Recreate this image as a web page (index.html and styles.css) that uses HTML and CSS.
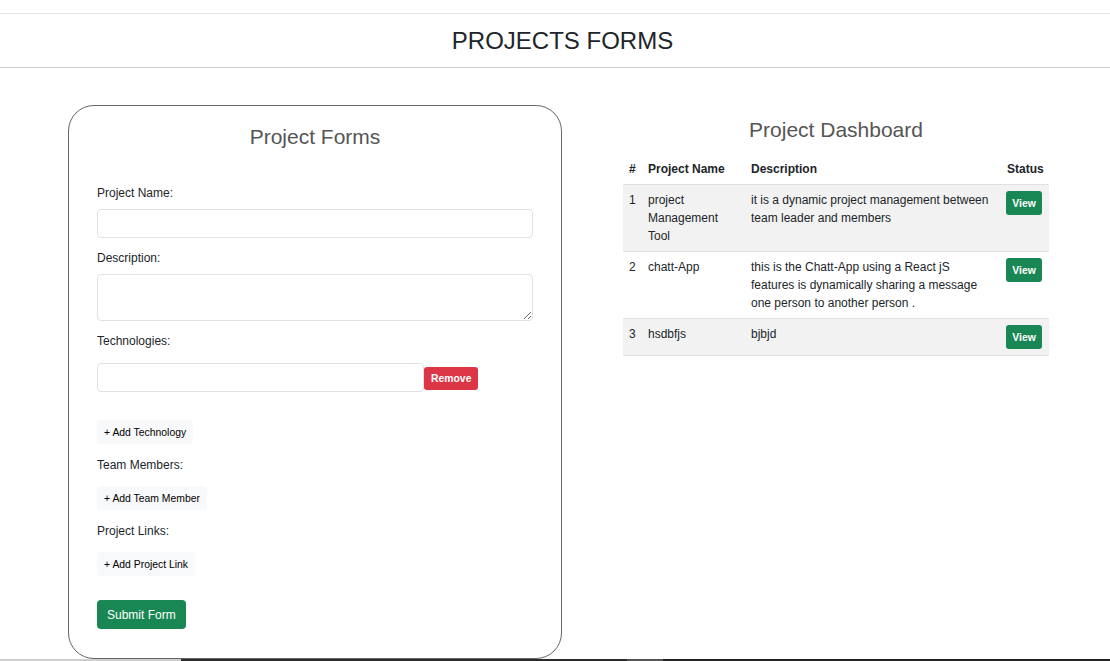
FILE: index.html
```html
<!DOCTYPE html>
<html lang="en">
<head>
<meta charset="utf-8">
<title>Projects Forms</title>
<link rel="stylesheet" href="styles.css">
</head>
<body>
<div class="topbar"></div>
<header class="page-header">
  <h1 class="page-title">PROJECTS FORMS</h1>
</header>
<main class="main">
  <section class="card">
    <h2 class="card-title">Project Forms</h2>
    <form class="form">
      <div class="field">
        <label class="label">Project Name:</label>
        <input class="input" type="text">
      </div>
      <div class="field">
        <label class="label">Description:</label>
        <textarea class="input textarea"></textarea>
      </div>
      <div class="field">
        <label class="label loose">Technologies:</label>
        <div class="tech-row">
          <input class="input tech-input" type="text">
          <button type="button" class="btn-remove">Remove</button>
        </div>
        <button type="button" class="btn-add spaced">+ Add Technology</button>
      </div>
      <div class="field list-field">
        <label class="label list-label">Team Members:</label>
        <button type="button" class="btn-add">+ Add Team Member</button>
      </div>
      <div class="field list-field">
        <label class="label list-label">Project Links:</label>
        <button type="button" class="btn-add">+ Add Project Link</button>
      </div>
      <button type="button" class="btn-submit">Submit Form</button>
    </form>
  </section>
  <section class="dashboard">
    <h2 class="dash-title">Project Dashboard</h2>
    <table class="table">
      <colgroup>
        <col class="c-num"><col class="c-name"><col class="c-desc"><col class="c-status">
      </colgroup>
      <thead>
        <tr><th>#</th><th>Project Name</th><th>Description</th><th>Status</th></tr>
      </thead>
      <tbody>
        <tr class="odd">
          <td>1</td><td>project Management Tool</td>
          <td>it is a dynamic project management between team leader and members</td>
          <td><button type="button" class="btn-view">View</button></td>
        </tr>
        <tr>
          <td>2</td><td>chatt-App</td>
          <td>this is the Chatt-App using a React jS features is dynamically sharing a message one person to another person .</td>
          <td><button type="button" class="btn-view">View</button></td>
        </tr>
        <tr class="odd">
          <td>3</td><td>hsdbfjs</td>
          <td>bjbjd</td>
          <td><button type="button" class="btn-view">View</button></td>
        </tr>
      </tbody>
    </table>
  </section>
</main>
<footer class="footer">
  <span class="seg seg-a"></span><span class="seg seg-b"></span><span class="seg seg-c"></span><span class="seg seg-d"></span>
</footer>
</body>
</html>
```
FILE: styles.css
```css
* { box-sizing: border-box; }
html, body { margin: 0; padding: 0; }
body {
  font-family: "Liberation Sans", Arial, sans-serif;
  color: #212529;
  background: #fff;
  font-size: 12px;
}
.topbar {
  height: 14px;
  border-bottom: 1px solid #e2e2e2;
}
.page-header {
  height: 54px;
  border-bottom: 1px solid #cfcfcf;
  display: flex;
  align-items: center;
  justify-content: center;
  padding-left: 15px;
}
.page-title {
  margin: 0;
  font-size: 24px;
  font-weight: 400;
  line-height: 28px;
  color: #212529;
}
.main {
  display: flex;
  align-items: flex-start;
  gap: 61px;
  padding: 37px 0 0 68px;
}
.card {
  width: 494px;
  border: 1px solid #666;
  border-radius: 26px;
  padding: 19px 28px 29px;
  flex: none;
}
.card-title {
  margin: 0 0 37px;
  text-align: center;
  font-size: 21px;
  line-height: 24px;
  font-weight: 400;
  color: #555;
}
.form { display: flex; flex-direction: column; align-items: flex-start; }
.field {
  display: flex;
  flex-direction: column;
  align-items: flex-start;
  width: 100%;
}
.field + .field { margin-top: 13px; }
.field + .list-field { margin-top: 14px; }
.label {
  font-size: 12px;
  line-height: 14px;
  margin-bottom: 9px;
}
.label.loose { margin-bottom: 15px; }
.label.list-label { margin-bottom: 14px; }
.input {
  width: 100%;
  height: 29px;
  border: 1px solid #dee2e6;
  border-radius: 4px;
  font-family: inherit;
  font-size: 12px;
  padding: 4px 8px;
  background: #fff;
  margin: 0;
}
.textarea { height: 47px; resize: vertical; display: block; }
.tech-row { display: flex; align-items: center; width: 100%; }
.tech-input { width: 327px; flex: none; }
.btn-remove {
  height: 23px;
  padding: 0 7px;
  border: none;
  border-radius: 3px;
  background: #dc3545;
  color: #fff;
  font-family: inherit;
  font-size: 10.4px;
  font-weight: 700;
  margin: 1px 0 0;
}
.btn-add {
  height: 24px;
  padding: 0 7px;
  border: none;
  border-radius: 3px;
  background: #f8f9fa;
  color: #000;
  font-family: inherit;
  font-size: 10.4px;
}
.btn-add.spaced { margin-top: 28px; }
.btn-submit {
  margin-top: 24px;
  height: 29px;
  padding: 0 10px;
  border: none;
  border-radius: 4px;
  background: #198754;
  color: #fff;
  font-family: inherit;
  font-size: 12px;
}
.dashboard {
  width: 426px;
  flex: none;
  margin-top: 13px;
}
.dash-title {
  margin: 0 0 12px;
  text-align: center;
  font-size: 21px;
  line-height: 24px;
  font-weight: 400;
  color: #555;
}
.table {
  width: 426px;
  border-collapse: collapse;
  table-layout: fixed;
  font-size: 12px;
  line-height: 18px;
}
.c-num { width: 19px; }
.c-name { width: 103px; }
.c-desc { width: 256px; }
.c-status { width: 48px; }
.table th, .table td {
  padding: 6px;
  text-align: left;
  vertical-align: top;
  border-bottom: 1px solid #dee2e6;
}
.table th { font-weight: 700; }
.table tr.odd td { background: #f2f2f2; }
.btn-view {
  display: block;
  width: 36px;
  height: 24px;
  padding: 0;
  margin-left: -1px;
  border: none;
  border-radius: 3px;
  background: #198754;
  color: #fff;
  font-family: inherit;
  font-size: 10.4px;
  font-weight: 700;
}
.footer {
  display: flex;
  height: 20px;
}
.seg { display: block; height: 100%; }
.seg-a { width: 181px; background: #cfcfcf; }
.seg-b { width: 446px; background: #2b2b2b; }
.seg-c { width: 36px; background: #555; }
.seg-d { flex: 1; background: #232323; }
```
